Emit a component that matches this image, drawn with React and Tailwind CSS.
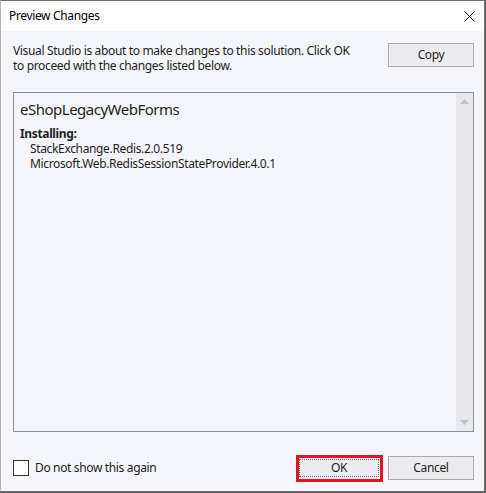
const font = { fontFamily: '"Noto Sans", "Open Sans", sans-serif' }

const Button = ({ children, focused }) => (
  <div className="relative w-[86px] h-[24px]">
    <button className="w-full h-full bg-[#ececf0] border border-[#adadad] text-[12px] text-[#1e1e1e] flex items-center justify-center p-[2px]">
      {focused ? (
        <span className="w-full h-full border border-dotted border-[#6d6d6d] flex items-center justify-center">
          {children}
        </span>
      ) : (
        children
      )}
    </button>
    {focused && (
      <span className="absolute left-0 right-[-1px] top-[-1px] bottom-[-2px] border-[3px] border-[#e81123] pointer-events-none" />
    )}
  </div>
)

export default function App() {
  return (
    <div className="w-[486px] h-[493px] bg-[#5c5c5c] tracking-[-0.35px]" style={font}>
      <div className="w-[485px] h-[492px] bg-white border border-[#707070] border-l-[#b4b4b4] flex flex-col">
        {/* title bar */}
        <div className="h-[30px] flex items-center justify-between pl-[8px] pr-[9px] shrink-0">
          <span className="text-[12px] text-black">Preview Changes</span>
          <svg width="11" height="11" viewBox="0 0 11 11">
            <path d="M0.5 0.5 L10.5 10.5 M10.5 0.5 L0.5 10.5" stroke="#1a1a1a" strokeWidth="1" />
          </svg>
        </div>

        {/* body */}
        <div className="flex-1 bg-[#f5f6fb] pt-[12px] pl-[12px] pr-[10px] pb-[11px] flex flex-col">
          <div className="flex justify-between items-start h-[30px]">
            <p className="text-[12px] leading-[15px] text-[#1e1e1e] w-[350px]">
              Visual Studio is about to make changes to this solution. Click OK to proceed with the changes listed below.
            </p>
            <Button>Copy</Button>
          </div>

          <div className="mt-[19px] h-[340px] border border-[#8592a8] bg-[#f5f6fb] flex">
            <div className="flex-1 pl-[6px] pt-[6px] text-[#1e1e1e]">
              <div className="text-[15px] leading-[20px] tracking-[-0.5px]">eShopLegacyWebForms</div>
              <div className="mt-[7px] text-[12px] leading-[15px] font-bold">Installing:</div>
              <div className="pl-[10px] text-[12px] leading-[15px]">
                <div>StackExchange.Redis.2.0.519</div>
                <div>Microsoft.Web.RedisSessionStateProvider.4.0.1</div>
              </div>
            </div>
            <div className="w-[17px] bg-[#e8e8ec] flex flex-col justify-between items-center py-[6px]">
              <svg width="9" height="5" viewBox="0 0 9 5">
                <path d="M0 5 L4.5 0 L9 5 Z" fill="#c2c3c9" />
              </svg>
              <svg width="9" height="5" viewBox="0 0 9 5">
                <path d="M0 0 L9 0 L4.5 5 Z" fill="#c2c3c9" />
              </svg>
            </div>
          </div>

          <div className="mt-[24px] h-[24px] flex items-center">
            <div className="flex items-center flex-1">
              <span className="w-[16px] h-[16px] bg-white border border-[#333333]" />
              <span className="ml-[6px] text-[12px] text-[#1e1e1e]">Do not show this again</span>
            </div>
            <Button focused>OK</Button>
            <div className="w-[6px]" />
            <Button>Cancel</Button>
          </div>
        </div>
      </div>
    </div>
  )
}
